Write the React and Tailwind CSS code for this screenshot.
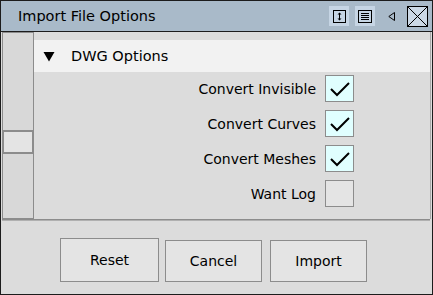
import React from "react";

const options = [
  { label: "Convert Invisible", checked: true },
  { label: "Convert Curves", checked: true },
  { label: "Convert Meshes", checked: true },
  { label: "Want Log", checked: false },
];

const Check = () => (
  <svg width="29" height="27" viewBox="0 0 29 27">
    <polyline points="5,13 11,19 23,7" fill="none" stroke="#000" strokeWidth="2" />
  </svg>
);

const App = () => {
  return (
    <div className="w-[433px] h-[295px] border border-[#1c1c1c] bg-[#dcdcdc] flex flex-col font-['DejaVu_Sans',sans-serif] text-[14px] text-black">
      {/* title bar */}
      <div className="h-[31px] shrink-0 border-b border-[#1c1c1c] bg-[#a9bac9] flex items-center pl-[17px] pr-[4px]">
        <span className="text-[14.5px] pt-[2px]">Import File Options</span>
        <div className="ml-auto flex items-center">
          <div className="w-[20px] h-[20px] bg-[#c6d5e4] flex items-center justify-center">
            <svg width="13" height="13" viewBox="0 0 13 13">
              <rect x="0.5" y="0.5" width="12" height="12" fill="none" stroke="#000" />
              <line x1="6.5" y1="3" x2="6.5" y2="10" stroke="#000" />
              <polygon points="4.5,4.5 6.5,2.5 8.5,4.5" fill="#000" />
              <polygon points="4.5,8.5 6.5,10.5 8.5,8.5" fill="#000" />
            </svg>
          </div>
          <div className="w-[20px] h-[20px] bg-[#c6d5e4] flex items-center justify-center ml-[6px]">
            <svg width="14" height="13" viewBox="0 0 14 13">
              <rect x="0.5" y="0.5" width="13" height="12" fill="none" stroke="#000" />
              <line x1="3" y1="3.5" x2="11" y2="3.5" stroke="#000" />
              <line x1="3" y1="5.5" x2="11" y2="5.5" stroke="#000" />
              <line x1="3" y1="7.5" x2="11" y2="7.5" stroke="#000" />
              <line x1="3" y1="9.5" x2="11" y2="9.5" stroke="#000" />
            </svg>
          </div>
          <div className="w-[8px] h-[9px] ml-[13px]">
            <svg width="8" height="9" viewBox="0 0 8 9">
              <polygon points="6.5,0.5 6.5,8.5 0.8,4.5" fill="none" stroke="#000" />
            </svg>
          </div>
          <div className="w-[21px] h-[21px] ml-[11px] border border-black bg-[#cbd8e5]">
            <svg width="19" height="19" viewBox="0 0 19 19" className="block">
              <line x1="0" y1="0" x2="19" y2="19" stroke="#000" />
              <line x1="19" y1="0" x2="0" y2="19" stroke="#000" />
            </svg>
          </div>
        </div>
      </div>

      {/* body */}
      <div className="flex-1 flex flex-col px-px">
        <div className="flex h-[187px] shrink-0">
          {/* scrollbar */}
          <div className="w-[32px] border border-[#8c8c8c] bg-[#d8d8d8] flex flex-col">
            <div className="mt-[97px] h-[24px] border border-y-2 border-[#8c8c8c] bg-[#e4e4e4]" />
          </div>
          {/* options panel */}
          <div className="flex-1 border-r border-[#a8a8a8] pt-[8px]">
            <div className="h-[32px] bg-[#f2f2f2] flex items-center pl-[9px]">
              <svg width="12" height="11" viewBox="0 0 12 11">
                <polygon points="0.5,1 11.5,1 6,10.5" fill="#000" />
              </svg>
              <span className="ml-[16px] pt-[1px] text-[14.5px]">DWG Options</span>
            </div>
            <div className="mt-[3px] flex flex-col gap-[8px] pr-[76px]">
              {options.map((opt, index) => (
                <div key={index} className="h-[27px] flex items-center justify-end">
                  <span className="mr-[9px] pt-[1px]">{opt.label}</span>
                  <div
                    className={`w-[29px] h-[27px] border border-[#8c8c8c] ${opt.checked ? "bg-[#e0ffff]" : "bg-[#e4e4e4]"}`}
                  >
                    {opt.checked && <Check />}
                  </div>
                </div>
              ))}
            </div>
          </div>
        </div>

        {/* separator */}
        <div className="h-[2px] mr-px bg-[#8c8c8c] border-b border-[#b0b0b0]" />

        {/* buttons */}
        <div className="flex-1 flex items-end pb-[12px] pl-[58px]">
          <button className="w-[99px] h-[44px] border border-[#8c8c8c] bg-[#e4e4e4]">Reset</button>
          <button className="w-[97px] h-[42px] ml-[6px] border border-[#8c8c8c] bg-[#e4e4e4]">Cancel</button>
          <button className="w-[97px] h-[42px] ml-[8px] border border-[#8c8c8c] bg-[#e4e4e4]">Import</button>
        </div>
      </div>
    </div>
  );
};

export default App;
